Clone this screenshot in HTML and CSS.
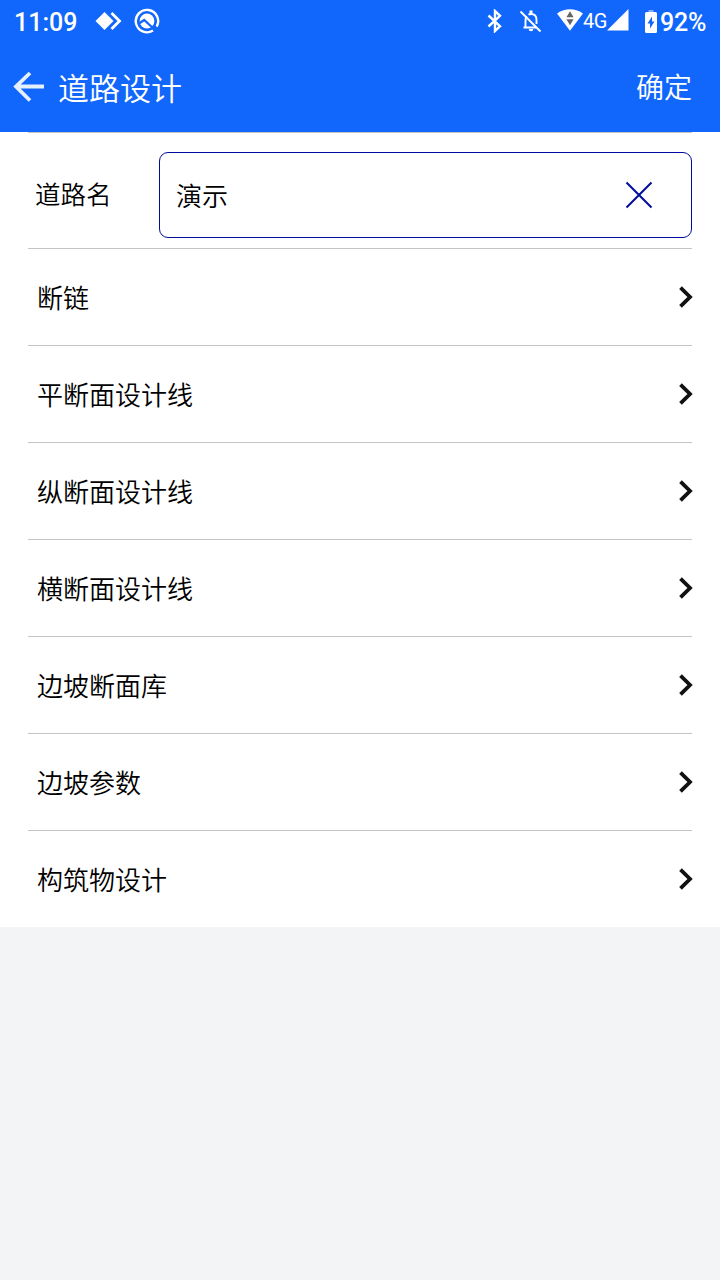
FILE: index.html
```html
<!DOCTYPE html>
<html lang="zh-CN">
<head>
<meta charset="utf-8">
<title>道路设计</title>
<link rel="stylesheet" href="styles.css">
</head>
<body>
<header class="top">
  <div class="status">
    <span class="clock">11:09</span>
    <svg class="i-diamond" width="28" height="22" viewBox="0 0 28 22"><path d="M.5 11 9.5 2l9 9-9 9z" fill="#fff"/><path d="M16.5 3 24.5 11l-8 8" fill="none" stroke="#fff" stroke-width="2.8"/></svg>
    <svg class="i-circle" width="26" height="26" viewBox="0 0 26 26"><path d="M19 22.5A11.2 11.2 0 1 1 22.7 18.6" fill="none" stroke="#fff" stroke-width="2.4"/><circle cx="13" cy="13" r="7.4" fill="#fff"/><path d="M5 15.5 10.2 12 21 22" fill="none" stroke="#1166fb" stroke-width="2.2"/></svg>
    <span class="fill"></span>
    <svg class="i-bt" width="16" height="24" viewBox="0 0 16 24"><path d="M1.5 6.5 13 17.2 8 22V2l5 4.8L1.5 17.5" fill="none" stroke="#fff" stroke-width="2.4"/></svg>
    <svg class="i-bell" width="24" height="24" viewBox="0 0 24 24"><path d="M4.5 18.5h13M6.5 18V11q0-2.2 1.3-3.7M9.5 5.6q1-.6 2.5-.6 5.5 0 5.5 6v4" fill="none" stroke="#fff" stroke-width="1.9"/><path d="M10.5 1.5h3v4h-3zM9.7 20h4.6q0 2.3-2.3 2.3T9.7 20z" fill="#fff"/><path d="m1.5 2.5 20 20" stroke="#fff" stroke-width="2"/></svg>
    <svg class="i-wifi" width="26" height="22" viewBox="0 0 26 22"><path d="M0 4.4Q13-3.8 26 4.4L13 21.8z" fill="#fff"/><path d="M13 2.2 16.6 8.2H9.4zM13 16.2 9.4 10.2h7.2z" fill="#666"/></svg>
    <span class="net">4G</span>
    <svg class="i-signal" width="22" height="22" viewBox="0 0 22 22"><path d="M0 21.5 21.5 0v21.5z" fill="#fff"/></svg>
    <svg class="i-battery" width="12" height="23" viewBox="0 0 12 23"><path d="M3.5 0h5v3h-5z" fill="#83aefd"/><rect y="2" width="12" height="21" rx="1.5" fill="#fff"/><path d="M7 6.5 2.5 13.5H5V18.5L9.5 11.5H7z" fill="#1166fb"/></svg>
    <span class="percent">92%</span>
  </div>
  <div class="bar">
    <svg class="back" width="32" height="32" viewBox="0 0 32 32"><path d="M31 15.5H3M17 2 3 15.5 17 29.5" fill="none" stroke="#e6effe" stroke-width="3.8"/></svg>
    <h1 class="title">道路设计</h1>
    <span class="confirm">确定</span>
  </div>
</header>
<main class="panel">
  <div class="name-row">
    <label class="label">道路名</label>
    <div class="field">
      <span class="text">演示</span>
      <svg width="28" height="28" viewBox="0 0 28 28"><path d="m1.5 1.5 25 25m0-25-25 25" stroke="#000c9c" stroke-width="2"/></svg>
    </div>
  </div>
  <div class="row"><span class="text">断链</span><svg class="chev" width="16" height="24" viewBox="0 0 16 24"><path d="m2.5 2.7 9.5 9.3-9.5 9.3" /></svg></div>
  <div class="row"><span class="text">平断面设计线</span><svg class="chev" width="16" height="24" viewBox="0 0 16 24"><path d="m2.5 2.7 9.5 9.3-9.5 9.3" /></svg></div>
  <div class="row"><span class="text">纵断面设计线</span><svg class="chev" width="16" height="24" viewBox="0 0 16 24"><path d="m2.5 2.7 9.5 9.3-9.5 9.3" /></svg></div>
  <div class="row"><span class="text">横断面设计线</span><svg class="chev" width="16" height="24" viewBox="0 0 16 24"><path d="m2.5 2.7 9.5 9.3-9.5 9.3" /></svg></div>
  <div class="row"><span class="text">边坡断面库</span><svg class="chev" width="16" height="24" viewBox="0 0 16 24"><path d="m2.5 2.7 9.5 9.3-9.5 9.3" /></svg></div>
  <div class="row"><span class="text">边坡参数</span><svg class="chev" width="16" height="24" viewBox="0 0 16 24"><path d="m2.5 2.7 9.5 9.3-9.5 9.3" /></svg></div>
  <div class="row"><span class="text">构筑物设计</span><svg class="chev" width="16" height="24" viewBox="0 0 16 24"><path d="m2.5 2.7 9.5 9.3-9.5 9.3" /></svg></div>
</main>
</body>
</html>
```
FILE: styles.css
```css
* { box-sizing: border-box; }
body {
  margin: 0;
  min-height: 1280px;
  background: #f3f4f6;
  color: #000;
  font: 350 26px/38px "Noto Sans CJK SC", sans-serif;
}
svg { display: block; flex: none; }
.top { height: 132px; background: #1166fb; color: #fff; }
.status {
  display: flex;
  align-items: center;
  height: 42px;
  padding: 0 14px;
  font: 500 26px/42px Roboto, sans-serif;
}
.clock { width: 81px; padding-top: 3px; font-size: 25px; }
.i-circle { margin-left: 11px; }
.fill { flex: 1; }
.i-bt { margin-right: 1px; }
.i-bell { margin-left: 15px; }
.i-wifi { margin: -2px 0 0 14px; }
.net { width: 24px; font-size: 20px; font-weight: 400; letter-spacing: -.5px; }
.i-signal { margin-top: -2px; }
.i-battery { margin-left: 16px; }
.percent { width: 46px; margin-left: 3px; padding-top: 3px; font-size: 25px; letter-spacing: -.2px; }
.bar { display: flex; align-items: center; height: 90px; padding: 0 28px 0 13px; }
.title { flex: 1; margin: 0 0 0 13px; font-size: 31px; font-weight: 350; }
.confirm { padding-bottom: 2px; font-size: 28px; }
.text { padding-bottom: 1px; }
.panel { padding: 0 28px; background: #fff; }
.name-row {
  display: flex;
  align-items: center;
  height: 116px;
  padding: 9px 0 0 7px;
  border-top: 1px solid #c4c4c4;
}
.label { width: 124px; padding-bottom: 4px; font-size: 25.5px; }
.field {
  display: flex;
  flex: 1;
  align-items: center;
  justify-content: space-between;
  height: 86px;
  padding: 0 38.5px 0 16px;
  border: 1px solid #000c9c;
  border-radius: 9px;
}
.row {
  display: flex;
  align-items: center;
  justify-content: space-between;
  height: 97px;
  padding-left: 9px;
  border-top: 1px solid #c4c4c4;
}
.chev { margin-right: -1.5px; fill: none; stroke: #111; stroke-width: 3.8; }
```
